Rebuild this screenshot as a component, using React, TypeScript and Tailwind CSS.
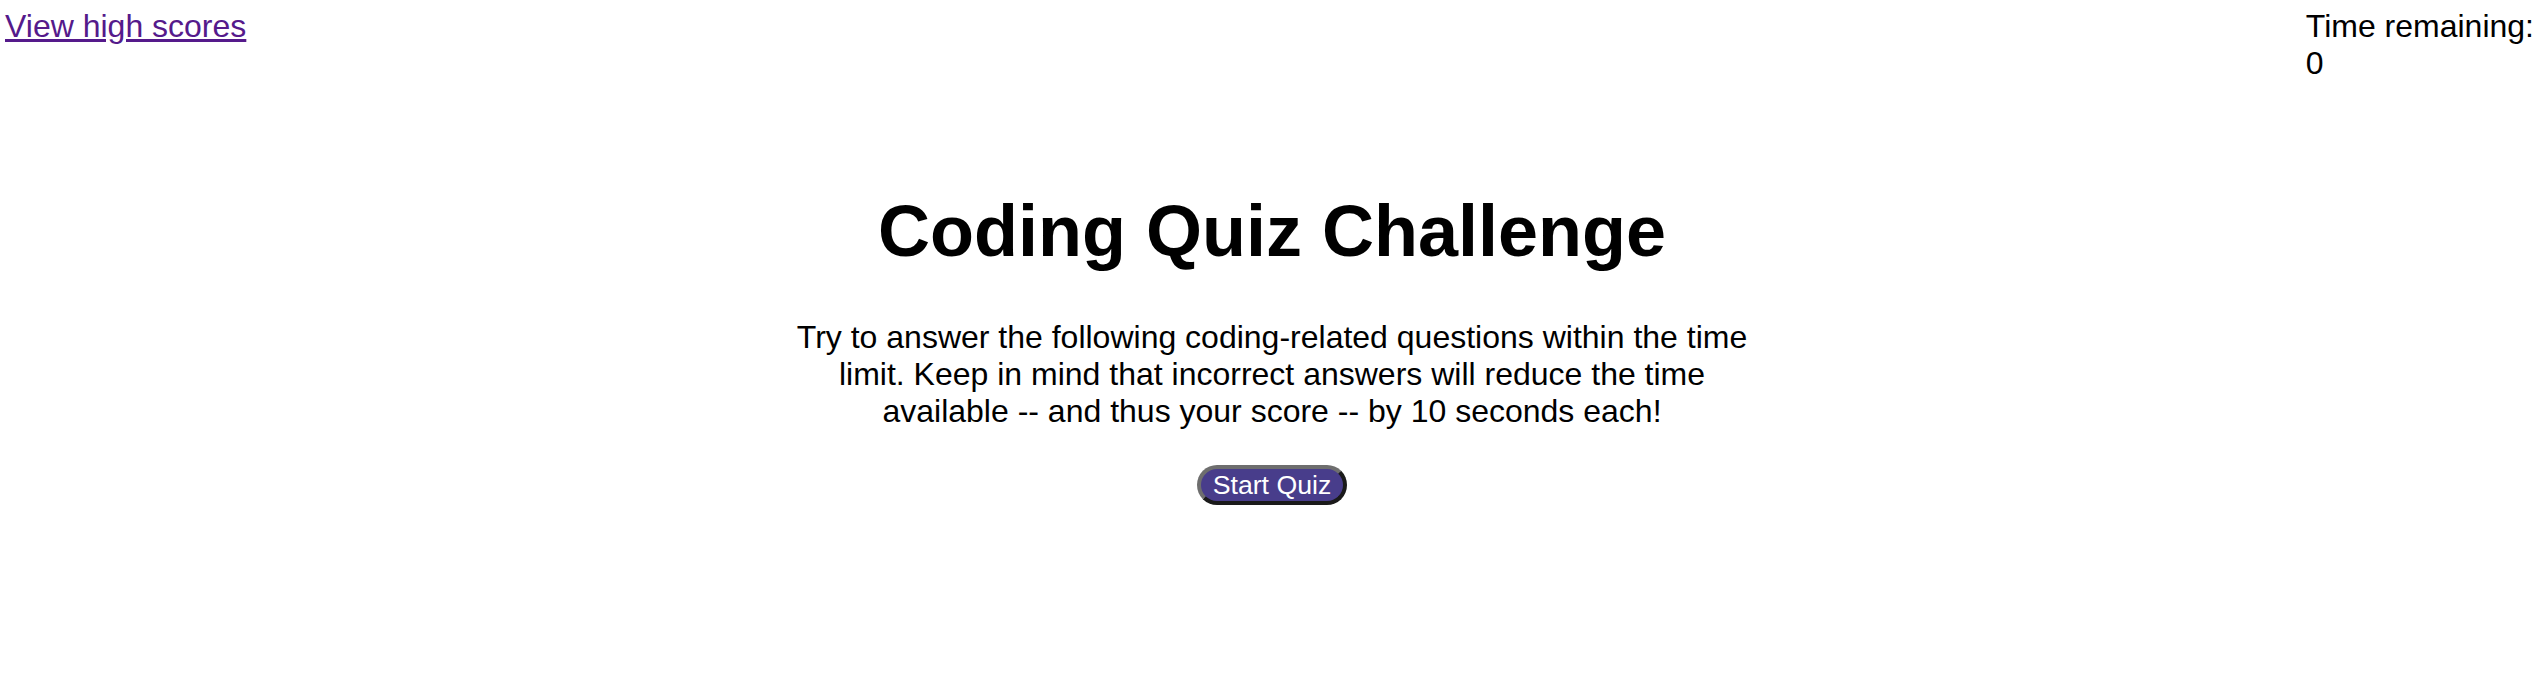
export default function App() {
  return (
    <div className="min-h-screen bg-white text-black font-['Liberation_Sans',Arial,sans-serif] text-[32px] leading-[1.149]">
      <header className="flex items-start justify-between pt-[8px] pl-[5px] pr-[10px]">
        <a href="#" className="text-[#551a8b] underline">
          View high scores
        </a>
        <div>
          <div>Time remaining:</div>
          <div>0</div>
        </div>
      </header>

      <main className="flex flex-col items-center mt-[108px]">
        <h1 className="text-[72px] font-bold leading-[1.149]">Coding Quiz Challenge</h1>
        <p className="mt-[47px] w-[990px] text-center">
          Try to answer the following coding-related questions within the time limit. Keep in mind that
          incorrect answers will reduce the time available -- and thus your score -- by 10 seconds each!
        </p>
        <button
          type="button"
          className="mt-[35px] rounded-full bg-[#483d8b] px-[12px] py-[1px] text-[26.7px] leading-[1.149] text-white border-[4px] border-t-[#6e6e6e] border-l-[#6e6e6e] border-b-[#1a1a1a] border-r-[#1a1a1a]"
        >
          Start Quiz
        </button>
      </main>
    </div>
  );
}
